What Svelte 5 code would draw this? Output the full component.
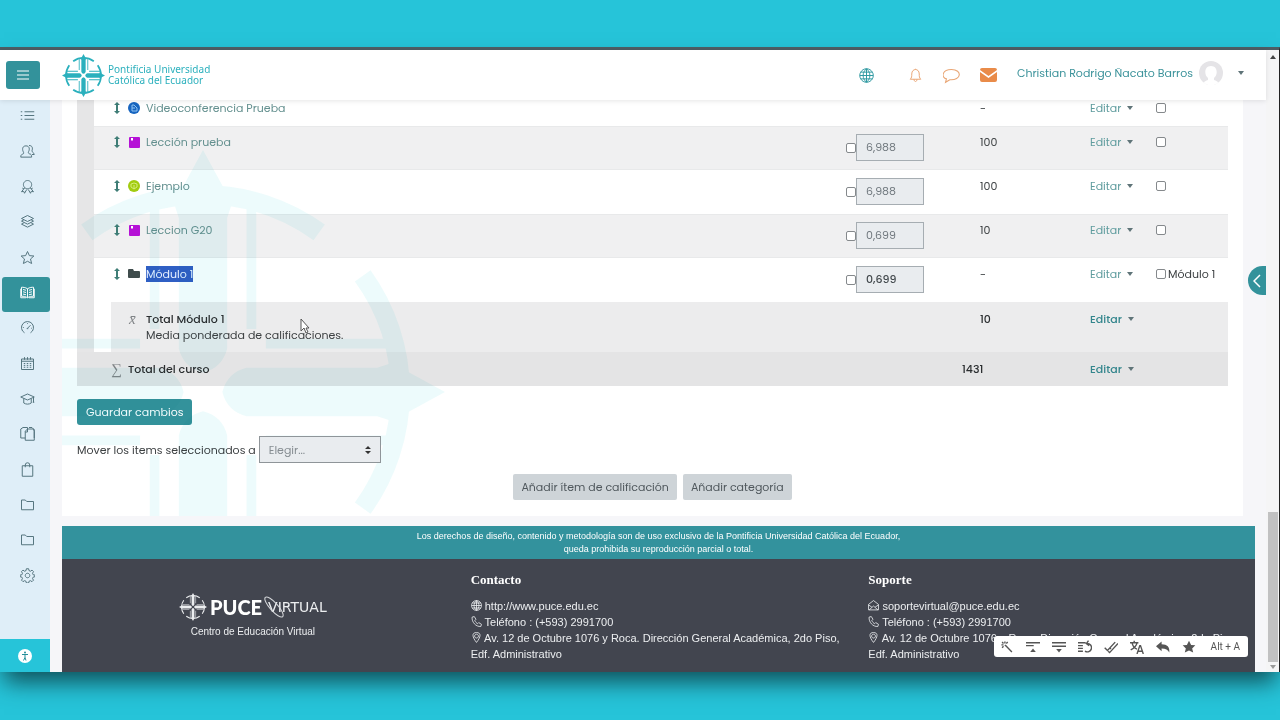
<script lang="ts">
  type Row = {
    id: string;
    name: string;
    icon: "video" | "lesson" | "quiz" | "folder";
    weight?: string;
    max: string;
    category?: boolean;
  };

  const rows: Row[] = [
    { id: "video", name: "Videoconferencia Prueba", icon: "video", max: "-" },
    { id: "leccion", name: "Lección prueba", icon: "lesson", weight: "6,988", max: "100" },
    { id: "ejemplo", name: "Ejemplo", icon: "quiz", weight: "6,988", max: "100" },
    { id: "g20", name: "Leccion G20", icon: "lesson", weight: "0,699", max: "10" },
    { id: "modulo", name: "Módulo 1", icon: "folder", weight: "0,699", max: "-", category: true },
  ];

  const folder = "M2 4h5l2 2h9v11H2z";

  const nav = [
    { label: "Contenido", d: "M6 5h13M6 10h13M6 15h13M1 5h2M1 10h2M1 15h2" },
    { label: "Participantes", d: "M8 2.500c5 0 5 5 3.500 7.500-1 2 0 3 2.500 3.500 1 .5 1.500 2 1.500 4H1c0-4 2-3.500 3.500-4.500 1-1 0-2-.5-3.500C3 7 3 2.500 8 2.500zM12 2c5 0 5 4 4 7-.5 2 3 2.500 3 5h-3" },
    { label: "Insignias", d: "M10 2a5.500 5.500 0 1 0 .1 0zM6 12l-4 5 3-.5 1 2.500 3-5M14 12l4 5-3-.5-1 2.500-3-5M3 12c1 1 2 1 3 0M17 12c-1 1-2 1-3 0" },
    { label: "Competencias", d: "M10 2l8 4-8 4-8-4zM2 9.500l8 4 8-4M2 13.500l8 4 8-4M2 9.500l3-1.500M18 9.500l-3-1.500M2 13.500l3-1.500M18 13.500l-3-1.500" },
    { label: "Favoritos", d: "M10 2l2.500 5.500 6 .5-4.500 4 1.500 6-5.500-3-5.500 3 1.500-6-4.500-4 6-.5z" },
    { label: "Calificaciones", active: true, d: "M10 5C7 3 4 3 2 3v12c3 0 5 0 8 2 3-2 5-2 8-2V3c-2 0-5 0-8 2zM10 5v12M4 6l4 1M4 9l4 1M4 12l4 1M16 6l-4 1M16 9l-4 1M16 12l-4 1M1 5v12h7M19 5v12h-7" },
    { label: "Tablero", d: "M6 17a8 8 0 1 1 8 0M10 11l4-4M9 11.500h2M4 10h1M10 4v1M15 11h1" },
    { label: "Calendario", d: "M2 4h16v14H2zM2 7h16M6 1.500V5M10 1.500V5M14 1.500V5M5 10h2M9 10h2M13 10h2M5 12.500h2M9 12.500h2M13 12.500h2M5 15h2M9 15h2M13 15h2" },
    { label: "Mis cursos", d: "M1 8l9-4 9 4-9 4zM5 10v6c3 2 7 2 10 0v-6M18 8v7M17 15h2" },
    { label: "Copias", d: "M7 16H1V4l3-2h6v3M7 7l3-3h2l6 0 1 3v12H7zM12 2h4l3 3v11M10 4v4H7" },
    { label: "Tareas", d: "M3 5h14v14H3zM7 7V4a3 3 0 0 1 6 0v3" },
    { label: "Carpeta 1", d: folder },
    { label: "Carpeta 2", d: folder },
    { label: "Ajustes", d: "M8.500 1h3l.5 2.500 2 .8 2-1.500 2 2-1.300 2.200.8 2 2.500.5v2l-2.500.7-.8 2 1.300 2-2 2-2-1.300-2 .8-.5 2.300h-3l-.5-2.300-2-.8-2 1.300-2-2 1.300-2-.8-2L0 11.500v-2L2.500 9l.8-2L2 4.800l2-2 2 1.500 2-.8zM10 7a3 3 0 1 0 .1 0z" },
  ];

  const tools = [
    { label: "Varita", d: "M8 8l9 9M7 2v3M2 7h3M3 3l2 2M11 3l-2 2M3 11l2-2M7 7l2 2" },
    { label: "Subir", d: "M0 4h20M0 8h11", fill: "M10 12l4 5H6z" },
    { label: "Bajar", d: "M0 4h20M0 9h20", fill: "M10 18l4-5H6z" },
    { label: "Rehacer", d: "M0 4h11M0 8h7M0 12h7M0 16h7M13 5a6 6 0 1 1-3 11M15 1l-3 4 4 3" },
    { label: "Revisar", d: "M1 11l4 4L16 3M6 16l2 2L20 5M8 11l2 2" },
    { label: "Traducir", d: "M0 4h12M6 1v3M3 4c1 5 4 8 7 9M10 4c-1 5-5 8-9 10M10 20l4-12h1l4 12M11 16h7" },
    { label: "Deshacer", fill: "M8 2v4c8 0 12 4 11 12-2-4-5-6-11-6v4L0 9z" },
    { label: "Destacar", fill: "M10 1l3 6 6 .5-4.500 4.500 1.500 6-6-3-6 3 1.500-6L1 7.500 7 7z" },
  ];

  const address = "Av. 12 de Octubre 1076 y Roca. Dirección General Académica, 2do Piso, Edf. Administrativo";
</script>

{#snippet line(d: string)}
  <svg class="line" viewBox="0 0 20 20" aria-hidden="true"><path {d} /></svg>
{/snippet}

{#snippet compass(cls: string)}
  <svg class="compass {cls}" viewBox="-50 -50 100 100" aria-hidden="true">
    {#each [0, 90, 180, 270] as turn}
      <g transform="rotate({turn})">
        <path class="arm" d="M0-50l6 11-1 3v27q-1 4-5 5-4-1-5-5v-27l-1-3z" />
        <path class="arm" d="M-11-38h2v25h-2zM9-38h2v25h-2z" />
        <path class="ring" d="M-24-33A41 41 0 0 1 24-33" />
      </g>
    {/each}
  </svg>
{/snippet}

{#snippet globe()}
  <svg class="line" viewBox="0 0 20 20" aria-hidden="true">
    <path d="M10 1a9 9 0 1 0 .1 0zM10 1c-6 5-6 13 0 18 6-5 6-13 0-18zM10 1v18M1 10h18M2.500 5.500h15M2.500 14.500h15" />
  </svg>
{/snippet}

{#snippet editar()}
  <button class="edit">Editar <i class="caret"></i></button>
{/snippet}

{#snippet phoneAndAddress()}
  <li>{@render line("M2 2l4-1 3 5-2 2c1 3 3 5 5 6l2-2 5 3-1 4C9 20 1 11 2 2z")} Teléfono : (+593) 2991700</li>
  <li>{@render line("M10 1C1 1 2 9 10 19 18 9 19 1 10 1zM10 4a3.500 3.500 0 1 0 .1 0z")} {address}</li>
{/snippet}

<div class="desktop">
  <div class="window">
    <div class="page">
      <header>
        <button class="menu" aria-label="Menú">
          <svg viewBox="0 0 12 12"><path d="M0 2h12M0 6h12M0 10h12" /></svg>
        </button>
        <a class="brand" href="#inicio">
          {@render compass("logo")}
          <span>Pontificia Universidad<br />Católica del Ecuador</span>
        </a>
        <div class="actions">
          <button class="lang" aria-label="Idioma">{@render globe()}</button>
          <button aria-label="Notificaciones">{@render line("M3 15c2-2 2-4 2-7 0-8 10-8 10 0 0 3 0 5 2 7zM8 15c0 4 4 4 4 0M10 1v1")}</button>
          <button class="chat" aria-label="Mensajes">{@render line("M10 3C-2 3-2 13 4 14l-1 4 5-3c14 1 15-12 2-12z")}</button>
          <button class="mail" aria-label="Correo">
            <svg viewBox="0 0 17 14"><path d="M0 2q0-2 2-2h13q2 0 2 2L8.500 8zM0 4l8.500 6L17 4v8q0 2-2 2H2q-2 0-2-2z" /></svg>
          </button>
        </div>
        <button class="user">
          Christian Rodrigo Ñacato Barros
          <svg class="avatar" viewBox="0 0 24 24" aria-hidden="true">
            <circle cx="12" cy="12" r="12" fill="#e5e4e7" />
            <path d="M12 5c7 0 7 9 3 12v2c2 1 4 1 4 3-4 3-10 3-14 0 0-2 2-2 4-3v-2C5 14 5 5 12 5z" fill="#fff" />
          </svg>
          <i class="caret"></i>
        </button>
      </header>

      <div class="body">
        <nav>
          <ul>
            {#each nav as item (item.label)}
              <li><a class:active={item.active} href="#nav" aria-label={item.label}>{@render line(item.d)}</a></li>
            {/each}
          </ul>
          <button class="access" aria-label="Accesibilidad">
            <svg viewBox="0 0 14 14">
              <circle cx="7" cy="7" r="7" fill="#fff" />
              <circle cx="7" cy="3.500" r="1" fill="#258f9a" />
              <path d="M4 5.500h6M7 5.500v3l-1.500 3M7 8.500l1 3" stroke="#258f9a" fill="none" />
            </svg>
          </button>
        </nav>

        <main>
          <section class="card">
            <table>
              <colgroup>
                <col class="indent" />
                <col class="indent" />
                <col />
                <col class="weight" />
                <col class="max" />
                <col class="menu-col" />
                <col class="pick" />
              </colgroup>
              <tbody>
                {#each rows as row, i (row.id)}
                  <tr class:odd={i % 2 === 1}>
                    {#if i === 0}
                      <td class="level" rowspan="6"></td>
                    {/if}
                    <td class="name" colspan="2">
                      <div class="item">
                        <svg class="move" viewBox="0 0 6 12" aria-hidden="true"><path d="M3 0l3 3H4v6h2l-3 3-3-3h2V3H0z" /></svg>
                        {#if row.icon === "lesson"}
                          <svg class="kind" viewBox="0 0 12 12"><rect x="1" y="1" width="11" height="11" rx="1" fill="#b511d6" /><path d="M3 2h2v3L4 4 3 5z" fill="#fff" /></svg>
                        {:else if row.icon === "folder"}
                          <svg class="kind" viewBox="0 0 12 12"><path d="M0 2q0-1 1-1h4l1 2h5q1 0 1 1v5q0 1-1 1H1q-1 0-1-1z" fill="#3f4c4c" /></svg>
                        {:else if row.icon === "video"}
                          <svg class="kind" viewBox="0 0 12 12"><circle cx="6" cy="6" r="6" fill="#1765c0" /><path d="M4 3h2l3 3v3H4zM4 6h3" fill="none" stroke="#8fc3f2" /></svg>
                        {:else}
                          <svg class="kind" viewBox="0 0 12 12"><circle cx="6" cy="6" r="6" fill="#a2cc10" /><path d="M3 4l3-1 3 1v3L6 9 3 7zM6 5v4" fill="none" stroke="#d6ec7c" /></svg>
                        {/if}
                        <a href="#item" class:selected={row.category}>{row.name}</a>
                      </div>
                    </td>
                    <td>
                      {#if row.weight}
                        <div class="override">
                          <input type="checkbox" aria-label="Ajustar peso de {row.name}" />
                          <input class="value" class:strong={row.category} type="text" value={row.weight} readonly aria-label="Peso de {row.name}" />
                        </div>
                      {/if}
                    </td>
                    <td class="number">{row.max}</td>
                    <td>{@render editar()}</td>
                    <td>
                      <label class="select-row">
                        <input type="checkbox" aria-label="Seleccionar {row.name}" />
                        {#if row.category}{row.name}{/if}
                      </label>
                    </td>
                  </tr>
                {/each}
                <tr class="subtotal">
                  <td class="blank"></td>
                  <td class="name" colspan="2">
                    <div class="item">
                      <span class="symbol">x̄</span>
                      <div><b>Total Módulo 1</b><br />Media ponderada de calificaciones.</div>
                    </div>
                    <svg class="pointer" viewBox="0 0 10 16" aria-hidden="true"><path d="M1 1v12l3-3 2 5 2-1-2-4h3z" /></svg>
                  </td>
                  <td class="number"><b>10</b></td>
                  <td class="bold">{@render editar()}</td>
                  <td></td>
                </tr>
                <tr class="total">
                  <td></td>
                  <td class="name" colspan="3">
                    <div class="item"><span class="symbol">∑</span><b>Total del curso</b></div>
                  </td>
                  <td class="number"><b>1431</b></td>
                  <td class="bold">{@render editar()}</td>
                  <td></td>
                </tr>
              </tbody>
            </table>

            <button class="save">Guardar cambios</button>
            <div class="move-to">
              <label for="destino">Mover los items seleccionados a</label>
              <div class="select">
                <select id="destino"><option>Elegir...</option></select>
                <svg viewBox="0 0 6 8" aria-hidden="true"><path d="M3 0l3 3H0zM3 8l3-3H0z" /></svg>
              </div>
            </div>
            <div class="add">
              <button>Añadir ítem de calificación</button>
              <button>Añadir categoría</button>
            </div>
            <div class="watermark">{@render compass("big")}</div>
          </section>

          <footer>
            <p class="rights">
              Los derechos de diseño, contenido y metodología son de uso exclusivo de la Pontificia Universidad Católica del Ecuador,<br />
              queda prohibida su reproducción parcial o total.
            </p>
            <div class="columns">
              <div class="puce">
                <div class="puce-logo">
                  {@render compass("white")}
                  <b>PUCE</b>
                  <span class="virtual">
                    VIRTUAL
                    <svg viewBox="0 0 24 24" aria-hidden="true"><ellipse cx="12" cy="12" rx="13" ry="4" transform="rotate(48 12 12)" /></svg>
                  </span>
                </div>
                Centro de Educación Virtual
              </div>
              <div class="column">
                <h2>Contacto</h2>
                <ul>
                  <li>{@render globe()} <a href="#puce">http://www.puce.edu.ec</a></li>
                  {@render phoneAndAddress()}
                </ul>
              </div>
              <div class="column">
                <h2>Soporte</h2>
                <ul>
                  <li>{@render line("M1 8l9-7 9 7v10H1zM1 9l6 4M19 9l-6 4M2 18l8-7 8 7")} <a href="#soporte">soportevirtual@puce.edu.ec</a></li>
                  {@render phoneAndAddress()}
                </ul>
              </div>
            </div>
          </footer>
        </main>
      </div>

      <button class="drawer" aria-label="Abrir bloques">
        <svg viewBox="0 0 8 14"><path d="M7 1L1 7l6 6" /></svg>
      </button>
    </div>

    <div class="scrollbar" aria-hidden="true">
      <i class="up"></i>
      <i class="thumb"></i>
      <i class="down"></i>
    </div>

    <div class="toolbar">
      {#each tools as tool (tool.label)}
        <button aria-label={tool.label}>
          <svg viewBox="0 0 20 20">
            {#if tool.d}<path class="stroke" d={tool.d} />{/if}
            {#if tool.fill}<path d={tool.fill} />{/if}
          </svg>
        </button>
      {/each}
      <span>Alt + A</span>
    </div>
  </div>
</div>

<style>
  :global(body) {
    margin: 0;
    background: #26c4d9;
  }
  .desktop {
    box-sizing: border-box;
    min-height: 100vh;
    padding: 47px 0 46px;
    background: #26c4d9;
    font-family: Poppins, Inter, sans-serif;
    font-size: 11px;
    line-height: 16px;
    color: #3d4143;
    overflow: hidden;
  }
  button,
  input,
  select {
    font: inherit;
    color: inherit;
    margin: 0;
  }
  button {
    border: 0;
    padding: 0;
    background: none;
    cursor: pointer;
  }
  a {
    color: inherit;
    text-decoration: none;
  }
  ul {
    list-style: none;
    margin: 0;
    padding: 0;
  }
  svg {
    display: block;
    flex: none;
  }
  .line {
    width: 15px;
    height: 15px;
    fill: none;
    stroke: currentColor;
    stroke-width: 1.3;
  }
  .caret {
    border: 3px solid transparent;
    border-top: 4px solid #5f7478;
    border-bottom: 0;
  }

  .window {
    position: relative;
    display: flex;
    border-top: 3px solid #4d5d64;
    border-right: 1px solid #222;
    background: #f6f6f9;
    box-shadow: 0 14px 22px -4px rgba(10, 50, 55, 0.8);
  }
  .page {
    position: relative;
    flex: 1;
    min-width: 0;
  }

  header {
    position: relative;
    z-index: 2;
    display: flex;
    align-items: center;
    box-sizing: border-box;
    height: 50px;
    padding: 0 22px 0 6px;
    background: #fff;
    box-shadow: 0 1px 5px rgba(0, 0, 0, 0.1);
  }
  .menu {
    display: grid;
    place-items: center;
    width: 34px;
    height: 28px;
    border-radius: 3px;
    background: #33929b;
  }
  .menu svg {
    width: 12px;
    height: 12px;
    stroke: #fff;
  }
  .brand {
    display: flex;
    align-items: center;
    gap: 3px;
    margin-left: 22px;
    font-family: "Noto Sans", sans-serif;
    font-size: 10px;
    line-height: 11px;
    color: #2bb0bd;
  }
  .compass .arm {
    fill: currentColor;
  }
  .compass .ring {
    fill: none;
    stroke: currentColor;
    stroke-width: 4;
  }
  .logo {
    width: 43px;
    height: 43px;
  }
  .actions {
    display: flex;
    align-items: center;
    gap: 20px;
    margin-left: auto;
    color: #e9a675;
  }
  .lang {
    margin-right: 14px;
    color: #2d98a0;
  }
  .chat .line {
    width: 17px;
    height: 17px;
  }
  .mail svg {
    width: 17px;
    height: 14px;
    fill: #e98b49;
  }
  .user {
    display: flex;
    align-items: center;
    gap: 6px;
    margin-left: 20px;
    padding-bottom: 4px;
    color: #3b929a;
  }
  .avatar {
    width: 24px;
    height: 24px;
    margin-right: 9px;
  }

  .body {
    display: flex;
  }
  nav {
    display: flex;
    flex-direction: column;
    width: 50px;
    background: #dfeef8;
    color: #52727c;
  }
  nav ul {
    display: flex;
    flex-direction: column;
    flex: 1;
    margin-bottom: 44px;
  }
  nav li {
    flex: 1;
    display: flex;
  }
  nav a {
    flex: 1;
    display: grid;
    place-items: center;
    margin-left: 2px;
    padding: 0 0 4px 2px;
  }
  .active {
    border-radius: 3px;
    background: #33929b;
    color: #fff;
  }
  .access {
    display: grid;
    place-items: center;
    height: 33px;
    background: #26c4d9;
  }
  .access svg {
    width: 14px;
    height: 14px;
  }

  main {
    flex: 1;
    min-width: 0;
    padding: 0 11px 0 12px;
  }
  .card {
    position: relative;
    margin-right: 12px;
    padding: 0 15px 16px;
    background: #fff;
    overflow: hidden;
  }
  table {
    width: 100%;
    table-layout: fixed;
    border-collapse: separate;
    border-spacing: 0;
  }
  .indent {
    width: 17px;
  }
  .weight {
    width: 116px;
  }
  .max {
    width: 128px;
  }
  .menu-col {
    width: 66px;
  }
  .pick {
    width: 72px;
  }
  td {
    box-sizing: border-box;
    height: 44px;
    padding: 8px 0 0;
    vertical-align: top;
  }
  tr:first-child td {
    height: 26px;
    padding-top: 0;
  }
  .odd td {
    background: #f0f0f1;
    box-shadow: inset 0 1px #e8e9ea, inset 0 -1px #e8e9ea;
  }
  td.level {
    background: #e6e6e7;
  }
  .number {
    padding-left: 18px;
  }
  .name {
    position: relative;
  }
  .item {
    display: flex;
    align-items: flex-start;
    padding-left: 20px;
  }
  .move {
    width: 6px;
    height: 12px;
    margin: 2px 8px 0 0;
    fill: #3f7d76;
  }
  .kind {
    width: 12px;
    height: 12px;
    margin: 2px 6px 0 0;
  }
  .item a {
    color: #64908f;
  }
  .item a.selected {
    background: #2f5fc4;
    color: #e8f0ff;
  }
  .override {
    display: flex;
    align-items: center;
  }
  input[type="checkbox"] {
    appearance: none;
    box-sizing: border-box;
    width: 10px;
    height: 10px;
    border: 1px solid #85898c;
    border-radius: 2px;
    background: #fff;
  }
  .value {
    box-sizing: border-box;
    width: 68px;
    height: 27px;
    padding: 0 9px;
    border: 1px solid #a6adb2;
    background: #e9ecef;
    color: #70787e;
  }
  .value.strong {
    color: #43494d;
    font-weight: 500;
  }
  .edit {
    display: flex;
    align-items: center;
    gap: 6px;
    color: #5f9c9e;
  }
  .bold .edit {
    color: #34868d;
    font-weight: 500;
  }
  .select-row {
    display: flex;
    align-items: center;
    gap: 2px;
    height: 15px;
  }
  b {
    font-weight: 500;
    color: #2b2e30;
  }
  .subtotal td {
    height: 50px;
    padding-top: 9px;
    background: #ececed;
  }
  .subtotal td.blank {
    background: #fff;
  }
  .subtotal .item {
    padding-left: 18px;
  }
  .symbol {
    width: 17px;
    font-family: "Liberation Serif", serif;
    font-size: 15px;
    font-style: italic;
    color: #808487;
  }
  .total .symbol {
    font-style: normal;
  }
  .total td {
    height: 34px;
    padding-top: 9px;
    background: #e4e4e5;
  }
  .total .number {
    padding-left: 0;
  }
  .total .item {
    padding-left: 17px;
  }
  .pointer {
    position: absolute;
    top: 16px;
    left: 189px;
    width: 10px;
    height: 16px;
    fill: #fff;
    stroke: #555;
  }
  .save {
    display: block;
    height: 26px;
    margin-top: 13px;
    padding: 0 9px;
    border-radius: 3px;
    background: #33929b;
    color: #fff;
  }
  .move-to {
    display: flex;
    align-items: center;
    gap: 3px;
    margin-top: 11px;
  }
  .select {
    position: relative;
    z-index: 1;
  }
  .select select {
    appearance: none;
    box-sizing: border-box;
    width: 122px;
    height: 27px;
    padding: 0 9px;
    border: 1px solid #8f9599;
    border-radius: 0;
    background: #e9ecef;
    color: #868d92;
  }
  .select svg {
    position: absolute;
    top: 10px;
    right: 10px;
    width: 6px;
    height: 8px;
    fill: #333;
    pointer-events: none;
  }
  .add {
    display: flex;
    justify-content: center;
    gap: 6px;
    margin-top: 11px;
  }
  .add button {
    height: 26px;
    padding: 0 8px;
    border-radius: 2px;
    background: #ced4d8;
    color: #50585d;
  }
  .watermark {
    position: absolute;
    top: 50px;
    left: -101px;
    color: #b8f0f2;
    opacity: 0.25;
    mix-blend-mode: multiply;
    pointer-events: none;
  }
  .big {
    width: 484px;
    height: 484px;
  }

  footer {
    margin-top: 10px;
    background: #42454f;
    color: #fff;
    font-family: "Liberation Sans", Arial, sans-serif;
    font-size: 11px;
  }
  .rights {
    margin: 0;
    padding: 4px 0 3px;
    background: #33929d;
    font-size: 9px;
    line-height: 13px;
    text-align: center;
  }
  .columns {
    display: grid;
    grid-template-columns: 1fr 1fr 1fr;
    padding-bottom: 10px;
    color: #eceef0;
  }
  .puce {
    display: flex;
    flex-direction: column;
    align-items: center;
    padding: 34px 16px 0 0;
    font-size: 10px;
  }
  .puce-logo {
    display: flex;
    align-items: center;
    height: 27px;
    margin-bottom: 4px;
  }
  .white {
    width: 28px;
    height: 28px;
    margin-right: 3px;
  }
  .puce-logo b {
    color: #fff;
    font-family: Lato, sans-serif;
    font-size: 20px;
    font-weight: 900;
  }
  .virtual {
    position: relative;
    margin-left: 6px;
    font-family: "DejaVu Sans", sans-serif;
    font-size: 14px;
  }
  .virtual svg {
    position: absolute;
    top: -4px;
    left: -6px;
    width: 24px;
    height: 24px;
    fill: none;
    stroke: #d5d7da;
    overflow: visible;
  }
  .column {
    padding: 13px 8px 0 11px;
  }
  h2 {
    margin: 0 0 10px;
    color: #fff;
    font-family: "Liberation Serif", serif;
    font-size: 13px;
    line-height: 16px;
  }
  .column .line {
    display: inline-block;
    width: 11px;
    height: 11px;
    vertical-align: -1px;
    stroke-width: 1.5;
  }

  .drawer {
    position: absolute;
    z-index: 3;
    top: 216px;
    right: 0;
    display: grid;
    place-items: center;
    width: 18px;
    height: 29px;
    border-radius: 15px 0 0 15px;
    background: #33929b;
  }
  .drawer svg {
    width: 8px;
    height: 14px;
    fill: none;
    stroke: #fff;
    stroke-width: 1.5;
  }
  .scrollbar {
    display: flex;
    flex-direction: column;
    align-items: center;
    width: 13px;
    padding: 5px 0 3px;
    box-sizing: border-box;
    background: #f5f5f6;
  }
  .up,
  .down {
    border: 3px solid transparent;
  }
  .up {
    border-top: 0;
    border-bottom: 4px solid #444;
  }
  .down {
    border-bottom: 0;
    border-top: 4px solid #999;
  }
  .thumb {
    width: 10px;
    height: 150px;
    margin: auto 0 3px;
    background: #c1c1c2;
  }
  .toolbar {
    position: absolute;
    right: 31px;
    bottom: 15px;
    z-index: 4;
    display: flex;
    align-items: center;
    gap: 12px;
    height: 21px;
    padding: 0 8px 0 6px;
    border-radius: 3px;
    background: #fff;
    color: #555;
    font-family: Roboto, sans-serif;
    font-size: 10px;
  }
  .toolbar span {
    padding-left: 3px;
  }
  .toolbar svg {
    width: 14px;
    height: 14px;
    fill: currentColor;
  }
  .toolbar .stroke {
    fill: none;
    stroke: currentColor;
    stroke-width: 2;
  }
</style>
